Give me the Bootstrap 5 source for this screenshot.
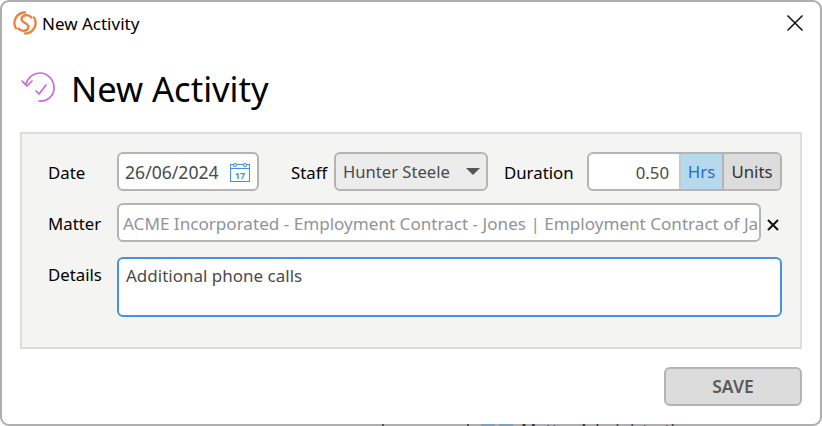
<!DOCTYPE html>
<html lang="en">
<head>
<meta charset="utf-8">
<title>New Activity</title>
<link href="https://cdn.jsdelivr.net/npm/bootstrap@5.3.0/dist/css/bootstrap.min.css" rel="stylesheet">
<style>
html, body { height: 426px; overflow: hidden; background: #fff; }
body { font-family: "Noto Sans", "Open Sans", sans-serif; font-size: 16.8px; color: #000; }
.win { height: 426px; border: 2px solid #aeaeae; border-radius: 9px; background: #fff; }
.win-bar { height: 42px; padding: 0 16px 0 11px; }
.win-title { font-size: 17px; line-height: 1; margin: 1px 0 0 5px; }
.win-close { width: 18px; height: 18px; }
.page-head { height: 88px; padding: 3px 0 0 19px; }
.head-icon { margin-bottom: 3px; }
.page-title { font-size: 34.5px; font-weight: 400; margin: 0 0 0 15px; line-height: 1; }
.panel { margin: 0 18px; height: 217px; border: 2px solid #dcdcdc; background: #f4f4f3; padding: 18px 18px 0 26px; }
.lbl { width: 69px; padding-top: 2px; }
.lbl-m { padding-top: 3px; }
.lbl-top { padding-top: 5px; }
.ctl { height: 39px; border: 2px solid #b4b4b4; border-radius: 6px; background: #fff; color: #4a4a4a; }
.ctl-date { width: 142px; padding: 2px 7px 0 6px; font-size: 17.6px; }
.ctl-date svg { margin-top: -2px; }
.ctl-staff { width: 154px; padding: 2px 6px 0 7px; background: #ececec; font-size: 16.6px; }
.ctl-staff svg { margin-top: -2px; }
.lbl-staff { width: 43px; margin-left: 32px; padding-top: 2px; }
.lbl-dur { width: 83px; margin-left: 16px; padding-top: 2px; }
.ctl-dur { width: 195px; overflow: hidden; }
.dur-val { flex: 1; padding: 2px 10px 0 0; }
.dur-hrs { flex: 0 0 43px; padding-top: 1px; background: #b7d9ee; color: #2a6fba; border-left: 2px solid #c9c9c9; }
.dur-units { flex: 0 0 58px; padding-top: 1px; background: #dcdcdc; color: #333; border-left: 2px solid #b4b4b4; }
.row-matter { margin-top: 12px; }
.ctl-matter { width: 644px; padding: 2px 4px 0; color: #8f9499; white-space: nowrap; overflow: hidden; font-size: 17.1px; }
.clear-x { width: 12px; height: 12px; margin: 5px 0 0 6px; }
.row-details { margin-top: 15px; }
.ctl-details { width: 665px; height: 60px; border-color: #4a90e2; padding: 4px 7px; font-size: 17px; }
.foot { padding: 18px 18px 0 0; }
.btn-save { width: 138px; height: 39px; border: 2px solid #b4b4b4; border-radius: 6px; background: #dcdcdc; color: #5a5a5a; font-weight: 600; font-size: 17.5px; padding: 0; }
.edge { left: 380px; bottom: -2px; height: 2px; width: 316px; overflow: hidden; font-size: 16.8px; line-height: 12px; color: #333; }
.edge-tick { flex: none; width: 2px; height: 2px; background: #555; }
.edge-tick-a { margin-right: 83px; }
.edge-tick-b { margin-right: 12px; }
.edge-ico { flex: none; width: 14px; height: 2px; margin-right: 4px; background: #7f9fc0; }
.edge-txt { margin-left: 4px; white-space: nowrap; }
</style>
</head>
<body>
<div class="win d-flex flex-column position-relative">
  <div class="win-bar d-flex align-items-center">
    <svg width="24" height="24" viewBox="0 0 24 24" fill="none" stroke="#f0803c" stroke-width="2.300" stroke-linecap="round"><path d="M12 1.500A10.500 10.500 0 0 0 3 17.500"/><path d="M12 22.500A10.500 10.500 0 0 0 21 6.500"/><path d="M18.500 6.500C16 3 9 3.500 8.500 8C8 12 16 12 15.500 16C15 20.500 8 21 5.500 17.500"/></svg>
    <span class="win-title">New Activity</span>
    <svg class="win-close ms-auto" viewBox="0 0 18 18" stroke="#111" stroke-width="1.500"><path d="M1.500 1.500L16.500 16.500M16.500 1.500L1.500 16.500"/></svg>
  </div>
  <div class="page-head d-flex align-items-center">
    <svg class="head-icon" width="35" height="34" viewBox="0 0 35 34" fill="none" stroke="#cc66dd" stroke-width="1.700" stroke-linecap="round" stroke-linejoin="round"><path d="M5 13C7 6 13 2 19 2C27 2 33 9 33 17C33 25 26 31 18 30"/><path d="M1 10L6 15L11 10"/><path d="M15 20L18 23L25 14"/></svg>
    <h1 class="page-title">New Activity</h1>
  </div>
  <div class="panel">
    <div class="d-flex align-items-center">
      <div class="lbl">Date</div>
      <div class="ctl ctl-date d-flex align-items-center justify-content-between">
        <span>26/06/2024</span>
        <svg width="20" height="20" viewBox="0 0 20 20" fill="none" stroke="#4a90e2" stroke-width="1.100"><rect x="0.500" y="2.500" width="19" height="17"/><path d="M0.500 6.500H19.500"/><circle cx="5" cy="3" r="1.500" fill="#fff"/><circle cx="15" cy="3" r="1.500" fill="#fff"/><text x="10" y="16.500" font-size="9" font-weight="700" text-anchor="middle" fill="#4a90e2" stroke="none">17</text></svg>
      </div>
      <span class="lbl-staff">Staff</span>
      <div class="ctl ctl-staff d-flex align-items-center justify-content-between">
        <span>Hunter Steele</span>
        <svg width="14" height="7" viewBox="0 0 14 7"><path d="M0 0H14L7 7Z" fill="#555"/></svg>
      </div>
      <span class="lbl-dur">Duration</span>
      <div class="ctl ctl-dur d-flex">
        <div class="dur-val d-flex align-items-center justify-content-end">0.50</div>
        <div class="dur-hrs d-flex align-items-center justify-content-center">Hrs</div>
        <div class="dur-units d-flex align-items-center justify-content-center">Units</div>
      </div>
    </div>
    <div class="d-flex row-matter align-items-center">
      <div class="lbl lbl-m">Matter</div>
      <div class="ctl ctl-matter d-flex align-items-center">ACME Incorporated - Employment Contract - Jones | Employment Contract of Jane Jones</div>
      <svg class="clear-x" viewBox="0 0 12 12" stroke="#111" stroke-width="2"><path d="M1 1L11 11M11 1L1 11"/></svg>
    </div>
    <div class="d-flex row-details">
      <div class="lbl lbl-top">Details</div>
      <div class="ctl ctl-details">Additional phone calls</div>
    </div>
  </div>
  <div class="foot d-flex justify-content-end">
    <button type="button" class="btn btn-save">SAVE</button>
  </div>
  <div class="edge position-absolute d-flex">
    <span class="edge-tick edge-tick-a"></span>
    <span class="edge-tick edge-tick-b"></span>
    <span class="edge-ico"></span>
    <span class="edge-ico"></span>
    <span class="edge-txt">Matter Administration</span>
  </div>
</div>
</body>
</html>
